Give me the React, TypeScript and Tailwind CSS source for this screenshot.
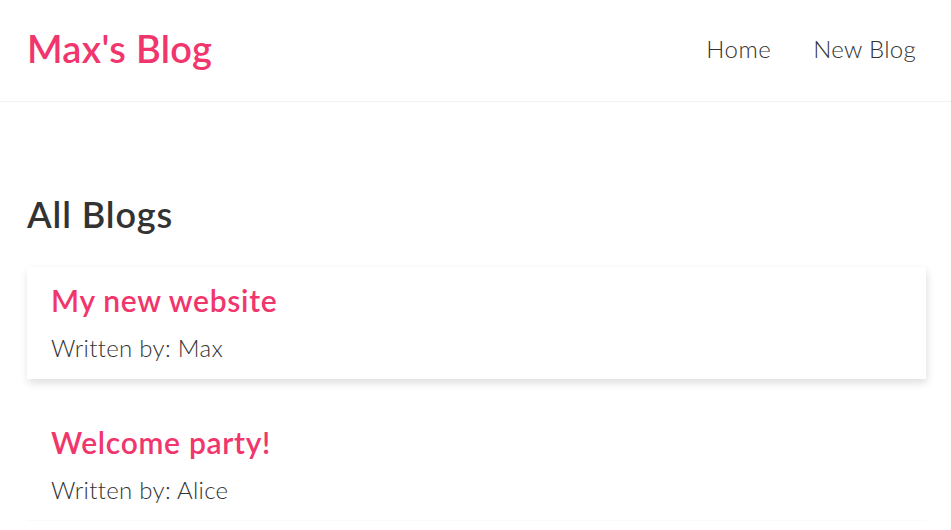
export default function App() {
  const blogs = [
    { id: 1, title: 'My new website', author: 'Max', hovered: true },
    { id: 2, title: 'Welcome party!', author: 'Alice', hovered: false },
  ]

  return (
    <div className="min-h-[530px] bg-white text-[#333] font-['Lato',sans-serif]">
      <nav className="flex items-start justify-between h-[102px] pt-[25px] pl-[27px] pr-[35px] border-b border-[#f2f2f2]">
        <h1 className="text-[38px] leading-[46px] font-semibold tracking-[0.3px] text-[#f1356d]">Max's Blog</h1>
        <div className="flex items-center gap-[42px] mt-[9px]">
          <a href="/" className="text-[24px] leading-[29px] font-light tracking-[0.5px] text-[#333]">
            Home
          </a>
          <a href="/create" className="text-[24px] leading-[29px] font-light tracking-[0.3px] text-[#333]">
            New Blog
          </a>
        </div>
      </nav>

      <main className="pl-[27px] pr-[25px] pt-[90px]">
        <h2 className="text-[36px] leading-[44px] font-semibold tracking-[0.9px]">All Blogs</h2>
        <div className="mt-[31px] flex flex-col gap-[30px]">
          {blogs.map((blog) => (
            <div
              key={blog.id}
              className={
                blog.hovered
                  ? 'pt-[15px] pb-[12px] px-[24px] border-b border-transparent shadow-[1px_4px_8px_rgba(0,0,0,0.13)]'
                  : 'pt-[15px] pb-[12px] px-[24px] border-b border-[#fafafa]'
              }
            >
              <h2 className="text-[30px] leading-[36px] font-semibold tracking-[0.7px] text-[#f1356d]">
                {blog.title}
              </h2>
              <p className="mt-[12px] text-[24px] leading-[36px] font-light tracking-[0.3px]">
                Written by: {blog.author}
              </p>
            </div>
          ))}
        </div>
      </main>
    </div>
  )
}
